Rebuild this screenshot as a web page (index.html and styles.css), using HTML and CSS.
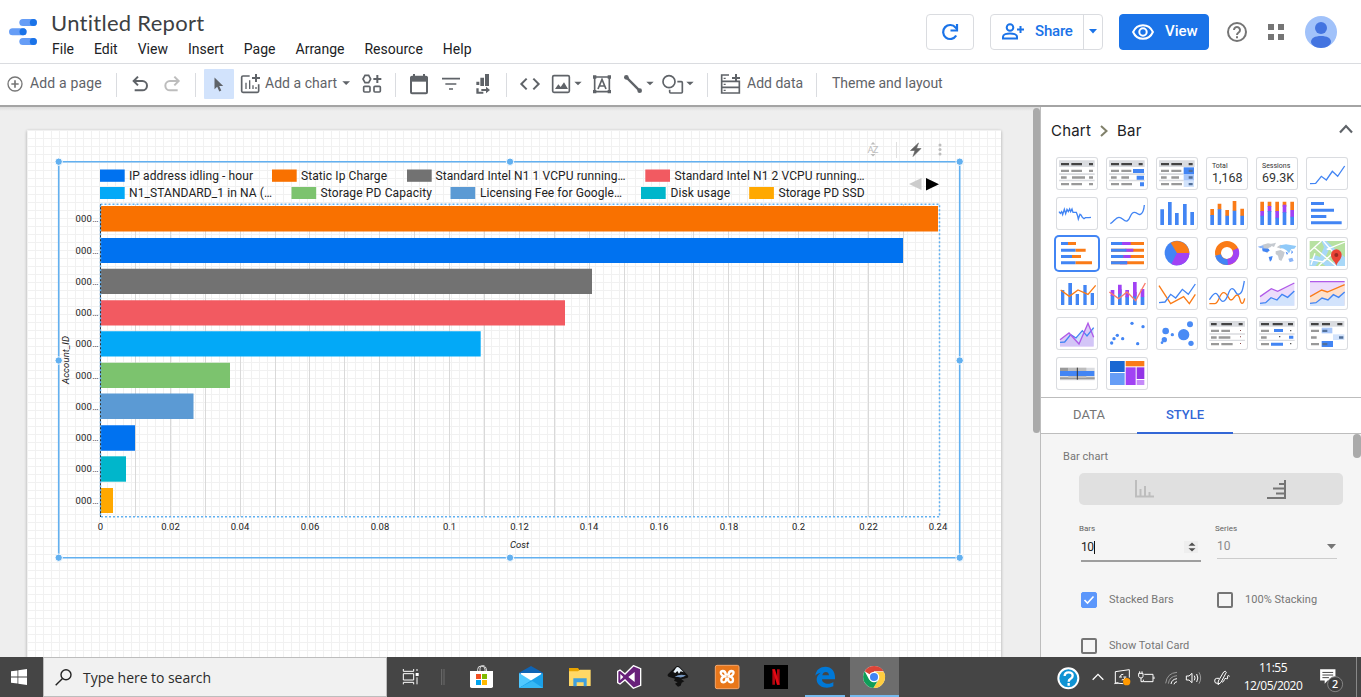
FILE: index.html
```html
<!DOCTYPE html>
<html lang="en">
<head>
<meta charset="utf-8">
<title>Untitled Report</title>
<link rel="stylesheet" href="styles.css">
</head>
<body>
<div class="app">
<header class="header">
  <svg class="logo" width="28" height="28" viewBox="27 57 84 84">
    <g fill="#669df6"><rect x="58" y="57" width="53" height="21" rx="10.500"/><rect x="27" y="85" width="53" height="21" rx="10.500"/><rect x="58" y="114" width="53" height="21" rx="10.500"/></g>
    <g fill="#1a73e8"><circle cx="100" cy="67.500" r="10.500"/><circle cx="69" cy="95.500" r="10.500"/><circle cx="100" cy="124.500" r="10.500"/></g>
  </svg>
  <div class="heading">
    <div class="title">Untitled Report</div>
    <nav class="menu"><span>File</span><span>Edit</span><span>View</span><span>Insert</span><span>Page</span><span>Arrange</span><span>Resource</span><span>Help</span></nav>
  </div>
  <div class="actions">
    <div class="btn refresh"><svg width="18" height="18" viewBox="0 0 18 18" fill="none" stroke="#1a73e8" stroke-width="2.200"><path d="M15.200 12.500A7 7 0 1 1 14.600 4.600L16 6"/><path d="M16 1v6.500H9.500" /></svg></div>
    <div class="btn share">
      <div class="share-main"><svg width="22" height="17" viewBox="0 0 22 17" fill="none" stroke="#1a73e8" stroke-width="2"><circle cx="8" cy="4.500" r="3.300"/><path d="M1 15.500v-1.700C1 11.500 5 10.500 8 10.500s7 1 7 3.300v1.700zM18.500 3v7M15 6.500h7"/></svg><span>Share</span></div>
      <div class="share-drop"><svg width="8" height="5" viewBox="0 0 8 5"><path d="M0 0h8L4 4.500z" fill="#1a73e8"/></svg></div>
    </div>
    <div class="btn view"><svg width="22" height="16" viewBox="0 0 22 16" fill="none" stroke="#fff" stroke-width="2"><path d="M1.100 8C3 3.700 6.700 1.200 11 1.200S19 3.700 20.900 8C19 12.300 15.300 14.800 11 14.800S3 12.300 1.100 8z"/><circle cx="11" cy="8" r="3.700"/></svg><span>View</span></div>
    <svg class="help" width="20" height="20" viewBox="0 0 20 20" fill="none" stroke="#757575" stroke-width="2"><circle cx="10" cy="10" r="9"/><path d="M7 8a3 3 0 1 1 4.600 2.500C10.500 11.300 10 11.700 10 13"/><path d="M10 14.300v2"/></svg>
    <svg class="apps" width="16" height="16" viewBox="0 0 16 16" fill="#757575"><path d="M0 0h6v6H0zM10 0h6v6h-6zM0 10h6v6H0zM10 10h6v6h-6z"/></svg>
    <svg class="avatar" width="32" height="32" viewBox="0 0 32 32"><circle cx="16" cy="16" r="16" fill="#a1c2fa"/><circle cx="16" cy="12" r="6" fill="#4374e0"/><path d="M6 26c0-4 4-6 10-6s10 2 10 6c0 3-5 6-10 6S6 29 6 26z" fill="#4374e0"/></svg>
  </div>
</header>

<div class="toolbar">
  <svg width="30" height="41" viewBox="0 192 90 123" fill="none" stroke="#777" stroke-width="4"><circle cx="45" cy="252" r="21"/><path d="M45 241v22M34 252h22" stroke-width="5"/></svg>
  <span class="label add-page">Add a page</span>
  <i class="sep"></i>
  <svg width="38" height="41" viewBox="351 192 114 123" fill="none" stroke="#5f6368" stroke-width="6"><path d="M402 243h25a14 14 0 0 1 0 28h-23M414 230l-13 13 13 13"/></svg>
  <svg width="40" height="41" viewBox="465 192 120 123" fill="none" stroke="#bdbdbd" stroke-width="6"><path d="M535 243h-25a14 14 0 0 0 0 28h23M523 230l13 13-13 13"/></svg>
  <i class="sep"></i>
  <div class="select-tool"><svg width="10" height="15" viewBox="0 0 10 15"><path d="M.5.500v11.700l2.700-2.500 2.100 4.700 2-.9-2.100-4.500h4z" fill="#5f6368"/></svg></div>
  <svg width="31" height="41" viewBox="702 192 93 123" fill="none" stroke="#5f6368" stroke-width="5"><path d="M749 228h-20q-4 0-4 4v41q0 4 4 4h43q4 0 4-4v-20"/><path d="M768 222v24M756 234h24" stroke-width="6"/><path d="M738 248v19M749 241v26M759 256v11M768 261v6" stroke-width="4"/></svg>
  <span class="label add-chart">Add a chart</span>
  <svg width="17" height="41" viewBox="1017 192 51 123"><path d="M1027 244h23l-11.500 11z" fill="#5f6368"/></svg>
  <svg width="39" height="41" viewBox="1068 192 117 123" fill="none" stroke="#5f6368" stroke-width="5"><path d="M1095 226h11l6 11-6 11h-11l-6-11z"/><path d="M1132 225v24M1120 237h24" stroke-width="6"/><rect x="1091" y="259" width="19" height="17" rx="3"/><rect x="1122" y="259" width="19" height="17" rx="3"/></svg>
  <i class="sep"></i>
  <svg width="40" height="41" viewBox="1188 192 120 123" fill="none" stroke="#5f6368" stroke-width="6"><rect x="1233" y="230" width="48" height="50" rx="3"/><path d="M1231 238h52" stroke-width="14"/><path d="M1242 222v10M1272 222v10"/></svg>
  <svg width="32" height="41" viewBox="1308 192 96 123" stroke="#5f6368" stroke-width="5"><path d="M1326 236h54M1336 252h33M1347 267h12"/></svg>
  <svg width="38" height="41" viewBox="-36 12 114 123" fill="#5f6368"><path d="M15 42h12v36H15zM1 53h11v25H1zM-11 65h9v10h-9zM-11 85h7v10h14v6h-21z"/><path d="M4 87h14v-7l12 10-12 10v-7H4z"/></svg>
  <i class="sep"></i>
  <svg width="39" height="41" viewBox="81 12 117 123" fill="none" stroke="#5f6368" stroke-width="6"><path d="M140 56l-16 16 16 16M160 56l16 16-16 16"/></svg>
  <svg width="41" height="41" viewBox="198 12 123 123"><rect x="218" y="47" width="50" height="50" rx="4" fill="none" stroke="#5f6368" stroke-width="5"/><path d="M225 87l10-14 7 8 10-14 12 20zM283 65h22l-11 11z" fill="#5f6368"/></svg>
  <svg width="31" height="41" viewBox="321 12 93 123" fill="none" stroke="#5f6368"><path d="M344 51h44v44h-44z" stroke-width="5"/><path d="M339 46h10v10h-10zM383 46h10v10h-10zM339 90h10v10h-10zM383 90h10v10h-10z" fill="#5f6368" stroke="none"/><path d="M354 87l12-29 12 29M358 78h16" stroke-width="5"/></svg>
  <svg width="40" height="41" viewBox="414 12 120 123" fill="#5f6368"><path d="M440 53l38 38" stroke="#5f6368" stroke-width="7"/><circle cx="439" cy="52" r="7"/><circle cx="479" cy="92" r="7"/><path d="M499 65h22l-11 11z"/></svg>
  <svg width="49" height="41" viewBox="534 12 147 123" fill="none" stroke="#5f6368" stroke-width="5"><circle cx="567" cy="65" r="18"/><path d="M592 65h12q3 0 3 3v28q0 3-3 3h-32q-3 0-3-3V89"/><path d="M619 65h22l-11 11z" fill="#5f6368" stroke="none"/></svg>
  <i class="sep"></i>
  <svg width="39" height="41" viewBox="684 12 117 123" fill="none" stroke="#5f6368" stroke-width="5"><path d="M747 45h-22v54h53V82h-53M725 64h53v18"/><path d="M768 42v24M756 54h24" stroke-width="6"/><path d="M731 55h6M731 73h6M731 91h6" stroke-width="4"/></svg>
  <span class="label add-data">Add data</span>
  <i class="sep"></i>
  <span class="label theme">Theme and layout</span>
</div>

<main class="work">
  <section class="canvas">
    <div class="sheet">
      <svg class="chart" width="974" height="527" viewBox="27 130 974 527">
        <g fill="#bdbdbd"><text x="867.500" y="153" font-size="9.500" textLength="11">AZ</text><path d="M870.500 144.500l2.500-2.500 2.500 2.500zM870.500 154l2.500 2.500 2.500-2.500z"/><circle cx="940" cy="145" r="1.500"/><circle cx="940" cy="149.500" r="1.500"/><circle cx="940" cy="154" r="1.500"/></g>
        <path d="M896.500 142v16" stroke="#e0e0e0"/><path d="M918.500 143l-8 7.500h4.500l-2 6 8-8h-4.500z" fill="#616161" stroke="#616161" stroke-width=".6"/>
        <path stroke="#d9d9d9" d="M135.500 204v313M170.500 204v313M205.500 204v313M240.500 204v313M275.500 204v313M309.500 204v313M344.500 204v313M379.500 204v313M414.500 204v313M449.500 204v313M484.500 204v313M519.500 204v313M554.500 204v313M589.500 204v313M624.500 204v313M659.500 204v313M693.500 204v313M728.500 204v313M763.500 204v313M798.500 204v313M833.500 204v313M868.500 204v313M903.500 204v313"/>
        <g>
          <path fill="#f97100" d="M101 206h837v25.500H101z"/><path fill="#0072f0" d="M101 238h802v25H101z"/><path fill="#727272" d="M101 268.700h491v25.300H101z"/><path fill="#f25a61" d="M101 300.300h464v25.300H101z"/><path fill="#03a9f7" d="M101 331.300h379.700v25.300H101z"/><path fill="#7cc36e" d="M101 362.800h129v25.200H101z"/><path fill="#5b9ad4" d="M101 393.600h92.500V419H101z"/><path fill="#0072f0" d="M101 425.300h34v25.400h-34z"/><path fill="#00b6cb" d="M101 456.300h25v25.400h-25z"/><path fill="#ffa800" d="M101 488h12v25h-12z"/>
          <path fill="#0072f0" d="M100 169.500h24.700v12.300H100z"/><path fill="#f97100" d="M272 169.500h24.700v12.300H272z"/><path fill="#727272" d="M407 169.500h24.700v12.300H407z"/><path fill="#f25a61" d="M645.300 169.500H670v12.300h-24.700z"/><path fill="#03a9f7" d="M100 187h24.700v12H100z"/><path fill="#7cc36e" d="M291.500 187h24.700v12h-24.700z"/><path fill="#5b9ad4" d="M450.500 187h24.700v12h-24.700z"/><path fill="#00b6cb" d="M641 187h24.700v12H641z"/><path fill="#ffa800" d="M749.200 187h24.700v12h-24.700z"/>
        </g>
        <g class="legend">
          <text x="129" y="180" textLength="124">IP address idling - hour</text><text x="301" y="180" textLength="86">Static Ip Charge</text><text x="435.500" y="180" textLength="190">Standard Intel N1 1 VCPU running…</text><text x="674.500" y="180" textLength="190">Standard Intel N1 2 VCPU running…</text>
          <text x="129" y="197" textLength="143">N1_STANDARD_1 in NA (…</text><text x="320.500" y="197" textLength="111.500">Storage PD Capacity</text><text x="480" y="197" textLength="142">Licensing Fee for Google…</text><text x="670.500" y="197" textLength="59.500">Disk usage</text><text x="778.500" y="197" textLength="86">Storage PD SSD</text>
        </g>
        <path d="M921.500 178v12l-12.500-6z" fill="#ccc"/><path d="M926 178v12.500l13-6.300z"/>
        <path d="M100.500 204v313" stroke="#333"/>
        <path d="M100.500 204.300h839v312.500h-839z" fill="none" stroke="#62b0f0" stroke-width="1.500" stroke-dasharray="2 2"/>
        <g class="axis">
          <text x="75.500" y="222" textLength="23">000…</text><text x="75.500" y="254" textLength="23">000…</text><text x="75.500" y="285" textLength="23">000…</text><text x="75.500" y="316" textLength="23">000…</text><text x="75.500" y="347" textLength="23">000…</text><text x="75.500" y="379" textLength="23">000…</text><text x="75.500" y="410" textLength="23">000…</text><text x="75.500" y="441" textLength="23">000…</text><text x="75.500" y="472" textLength="23">000…</text><text x="75.500" y="504" textLength="23">000…</text>
        </g>
        <g class="axis" text-anchor="middle">
          <text x="100.500" y="530">0</text><text x="170.500" y="530">0.02</text><text x="240" y="530">0.04</text><text x="310" y="530">0.06</text><text x="380" y="530">0.08</text><text x="449.500" y="530">0.1</text><text x="519.500" y="530">0.12</text><text x="589" y="530">0.14</text><text x="659" y="530">0.16</text><text x="729" y="530">0.18</text><text x="798.500" y="530">0.2</text><text x="868.500" y="530">0.22</text><text x="938" y="530">0.24</text>
          <g font-style="italic"><text x="519.500" y="548">Cost</text><text transform="translate(69 360) rotate(-90)" textLength="48">Account_ID</text></g>
        </g>
        <path d="M58.700 161.700h901v396h-901z" stroke="#62b0f0" fill="none" stroke-width="1.600"/>
        <g class="handle"><circle cx="58.700" cy="161.700" r="3.700"/><circle cx="510" cy="161.700" r="3.700"/><circle cx="959.700" cy="161.700" r="3.700"/><circle cx="58.700" cy="360.500" r="3.700"/><circle cx="959.700" cy="360.500" r="3.700"/><circle cx="58.700" cy="557.700" r="3.700"/><circle cx="510" cy="557.700" r="3.700"/><circle cx="959.700" cy="557.700" r="3.700"/></g>
      </svg>
    </div>
    <div class="canvas-scroll"></div>
  </section>

  <aside class="panel">
    <div class="panel-head"><span>Chart</span><svg width="8" height="12" viewBox="0 0 8 12" fill="none" stroke="#80806a" stroke-width="2"><path d="M1 1l5.500 5L1 11"/></svg><span>Bar</span><svg class="collapse" width="14" height="10" viewBox="0 0 14 10" fill="none" stroke="#5f6368" stroke-width="2.200"><path d="M1 8.500l6-6.500 6 6.500"/></svg></div>
    <div class="types">
      <div class="card"><svg viewBox="48 141 126 99"><path fill="#dadce0" d="M57 151h107v20H57zM57 190h107v5H57zM57 209h107v5H57z"/><path fill="#444" d="M63 159h24v7H63zM94 159h32v7H94zM147 159h12v7h-12z"/><path fill="#999" d="M63 179h24v7H63zM94 179h32v7H94zM147 179h12v7h-12zM63 199h17v7H63zM96 199h39v7H96zM147 199h12v7h-12zM63 219h24v7H63zM94 219h32v7H94zM147 219h12v7h-12z"/></svg></div>
      <div class="card"><svg viewBox="198 141 126 99"><path fill="#dadce0" d="M207 151h107v20H207zM207 190h107v5H207zM207 209h107v5H207z"/><path fill="#444" d="M213 159h24v7h-24zM244 159h32v7h-32zM296 159h12v7h-12z"/><path fill="#999" d="M213 179h24v7h-24zM244 179h30v7h-30zM213 199h17v7h-17zM244 199h23v7h-23zM213 219h24v7h-24zM244 219h32v7h-32z"/><path fill="#4285f4" d="M279 177h33v12h-33zM290 197h22v12h-22zM300 217h12v12h-12z"/></svg></div>
      <div class="card"><svg viewBox="348 141 126 99"><path fill="#dadce0" d="M357 151h107v20H357zM357 190h74v5h-74zM357 209h74v5h-74z"/><path fill="#4285f4" d="M431 172h31v20h-31z"/><path fill="#a8c7fa" d="M431 192h31v20h-31z"/><path fill="#d2e3fc" d="M431 212h31v19h-31z"/><path fill="#444" d="M363 159h24v7h-24zM394 159h32v7h-32zM446 159h12v7h-12z"/><path fill="#999" d="M363 179h24v7h-24zM394 179h30v7h-30zM363 199h17v7h-17zM394 199h23v7h-23zM363 219h24v7h-24zM394 219h32v7h-32z"/><path fill="#52709a" d="M446 179h12v7h-12zM446 199h12v7h-12zM446 219h12v7h-12z"/></svg></div>
      <div class="card metric"><small>Total</small><b>1,168</b></div>
      <div class="card metric"><small>Sessions</small><b>69.3K</b></div>
      <div class="card"><svg viewBox="798 141 126 99"><path class="l b" d="M810 221l17-1 17-21 15 11 18-26 16 15 21-31"/></svg></div>

      <div class="card"><svg viewBox="48 261 126 99"><path class="l b" d="M57 305l4 5 4-5 3 9 5-16 4 13 4-13 4 7 4-8 3 8 4-8 3 10 6 0 4 0 4 11 2 9 5-14 3 2 4 7 5 4 4-3 5 0 6 0 6-1"/></svg></div>
      <div class="card"><svg viewBox="198 261 126 99"><path class="l b" d="M211 341c10-5 16-19 26-19s15 14 24 11c12-4 8-26 22-26 9 0 10 9 18 6 7-3 11-16 12-28"/></svg></div>
      <div class="card"><svg viewBox="348 261 126 99"><path fill="#4285f4" d="M361 298h11v47h-11zM384 276h11v69h-11zM405 309h11v36h-11zM429 282h11v63h-11zM451 306h11v39h-11z"/></svg></div>
      <div class="card"><svg viewBox="498 261 126 99"><path fill="#fa7b17" d="M511 297h11v20h-11zM533 281h11v18h-11zM556 300h11v18h-11zM578 273h11v30h-11zM601 296h11v22h-11z"/><path fill="#4285f4" d="M511 315h11v30h-11zM533 298h11v47h-11zM556 317h11v28h-11zM578 302h11v43h-11zM601 317h11v28h-11z"/></svg></div>
      <div class="card"><svg viewBox="648 261 126 99"><path fill="#fa7b17" d="M661 275h11v30h-11zM683 275h11v15h-11zM706 275h11v30h-11zM728 275h11v15h-11zM751 275h11v25h-11z"/><path fill="#a142f4" d="M661 303h11v16h-11zM683 288h11v18h-11zM706 303h11v22h-11zM728 284h11v25h-11zM751 300h11v22h-11z"/><path fill="#4285f4" d="M661 317h11v28h-11zM683 303h11v42h-11zM706 323h11v22h-11zM728 307h11v38h-11zM751 320h11v25h-11z"/></svg></div>
      <div class="card"><svg viewBox="798 261 126 99"><path fill="#4285f4" d="M813 276h39v9h-39zM813 296h69v9h-69zM813 315h46v9h-46zM813 334h92v9h-92z"/></svg></div>

      <div class="card selected"><svg viewBox="48 381 126 99"><path fill="#4285f4" d="M63 396h21v9H63zM63 416h44v9H63zM63 435h33v9H63zM63 454h44v9H63z"/><path fill="#fa7b17" d="M84 396h24v9H84zM107 416h30v9h-30zM96 435h27v9H96zM107 454h49v9h-49z"/></svg></div>
      <div class="card"><svg viewBox="198 381 126 99"><path fill="#fa7b17" d="M213 396h99v9h-99zM213 416h99v9h-99zM213 435h99v9h-99zM213 454h99v9h-99z"/><path fill="#a142f4" d="M246 396h26v9h-26zM256 416h24v9h-24zM250 435h22v9h-22zM240 454h22v9h-22z"/><path fill="#4285f4" d="M213 396h33v9h-33zM213 416h46v9h-46zM213 435h37v9h-37zM213 454h48v9h-48z"/></svg></div>
      <div class="card"><svg viewBox="348 381 126 99"><circle cx="411" cy="429" r="37" fill="#4285f4"/><path fill="#fa7b17" d="M411 429l-19-31a37 37 0 0 1 56 31z"/><path fill="#a142f4" d="M411 429h37a37 37 0 0 1-54 33z"/></svg></div>
      <div class="card"><svg viewBox="498 381 126 99" fill="none" stroke-width="18"><circle cx="561" cy="429" r="27" stroke="#fa7b17"/><path stroke="#a142f4" d="M586 418a27 27 0 0 1-25 38"/><path stroke="#4285f4" d="M563 456a27 27 0 0 1-29-21"/></svg></div>
      <div class="card"><svg viewBox="648 381 126 99"><g fill="#c5cad0"><path d="M668 404l16-4 14 2-5 9-8 3-5 8 5 8-8-3-9-12zM695 401l13-3-6 13-7-3zM707 424l15-4 12 7-3 12-7 14-7-4-3-12-7-5zM710 412l11-8 9 4-7 8z"/></g><path fill="#90caf9" d="M721 406l17-3 31 5-6 8-9 1-7 13-8-9-8-5-11-3z"/><path fill="#8ab4f8" d="M653 410l16-4 3 7-10 2zM745 446l12-3 4 10-12 4z"/><path fill="#4285f4" d="M666 415l20 1 3 6-8 5-13-3zM686 441l12-3-3 12-5 5zM737 425l7 4-3 6zM755 420l4 7-5 5z"/></svg></div>
      <div class="card"><svg viewBox="798 381 126 99"><path fill="#b7e1a1" d="M809 393h106v75H809z"/><path fill="#a8d8f8" d="M809 450l17-14 14 5 12-30-8-18h16l35 33 20 16v26H856l-18-14-12 14h-17z"/><path fill="#b7e1a1" d="M853 448l15-32 23 21-12 22zM862 393h53v28l-22-6z"/><path d="M809 425l35-32M822 412l66 56M809 448l41 8 30-28-30-35M825 430l-12 34M860 418l55-22M836 468l20-20" stroke="#fff" stroke-width="4" fill="none"/><path fill="#ea4335" d="M889 467c-4-13-16-19-16-33a16 16 0 0 1 32 0c0 14-12 20-16 33z"/><circle cx="889" cy="435" r="6" fill="#982b22"/></svg></div>

      <div class="card"><svg viewBox="48 21 126 99"><path fill="#4285f4" d="M63 60h10v45H63zM85 39h11v66H85zM107 72h10v33h-10zM130 45h10v60h-10zM152 69h10v36h-10z"/><path class="l o" d="M62 60l26 19 26-19 30 13 23-27"/></svg></div>
      <div class="card"><svg viewBox="198 21 126 99"><path fill="#4285f4" d="M212 76h11v29h-11zM234 58h11v47h-11zM256 79h11v26h-11zM279 66h11v39h-11zM302 80h11v25h-11z"/><path fill="#a142f4" d="M212 60h11v18h-11zM234 44h11v27h-11zM256 60h11v22h-11zM279 36h11v43h-11zM302 57h11v24h-11z"/><path class="l" stroke="#fa7b6b" d="M208 66l28 20 25-20 26 26 29-53"/></svg></div>
      <div class="card"><svg viewBox="348 21 126 99"><path class="l o" d="M357 47l35 54 39-21 17 21 18-28"/><path class="l b" d="M357 98l18-2 17-23 15 11 20-26 18 15 21-31"/></svg></div>
      <div class="card"><svg viewBox="498 21 126 99"><path class="l o" d="M508 101h16c13 0 14-33 27-33 12 0 14 22 22 22 9 0 10-15 18-15 10 0 8 25 15 25 6 0 7-11 8-15"/><path class="l b" d="M508 89c6-8 12-19 19-19 9 0 11 24 22 24 15 0 15-38 27-38 11 0 10 17 18 17 12 0 14-14 19-40"/></svg></div>
      <div class="card"><svg viewBox="648 21 126 99"><path fill="#ecdcfb" d="M660 80l34-24 19 8 50-25v68H660z"/><path fill="#d2e3fc" d="M660 100l17-2 16-15 18 7 15-17 17 9 20-19v44H660z"/><path class="l p" d="M660 80l34-24 19 8 50-25"/><path class="l b" d="M660 100l17-2 16-15 18 7 15-17 17 9 20-19"/></svg></div>
      <div class="card"><svg viewBox="798 21 126 99"><path fill="#ecdcfb" d="M810 34h104v70H810z"/><path fill="#fee0cc" d="M810 80l35-20 17 6 52-22v60H810z"/><path fill="#d2e3fc" d="M810 100l18-2 18-14 18 6 16-16 16 8 18-16v42H810z"/><path class="l p" d="M810 35h104"/><path class="l o" d="M810 80l35-20 17 6 52-22"/><path class="l b" d="M810 100l18-2 18-14 18 6 16-16 16 8 18-16"/></svg></div>

      <div class="card"><svg viewBox="48 141 126 99"><path fill="#d2e3fc" d="M60 217l14-1 18-22 16 10 19-22 14 16 20-25v55H60z"/><path fill="#d3bdf5" opacity=".8" d="M60 209l27-20 30 33 27-62 17 42v28H60z"/><path class="l b" d="M60 217l14-1 18-22 16 10 19-22 14 16 20-25"/><path class="l p" d="M60 209l27-20 30 33 27-62 17 42"/></svg></div>
      <div class="card"><svg viewBox="198 141 126 99" fill="#4285f4"><circle cx="215" cy="219" r="5"/><circle cx="222" cy="206" r="5"/><circle cx="232" cy="196" r="5"/><circle cx="248" cy="206" r="5"/><circle cx="276" cy="160" r="5"/><circle cx="309" cy="170" r="5"/><circle cx="293" cy="221" r="5"/></svg></div>
      <div class="card"><svg viewBox="348 141 126 99" fill="#4a8bf5"><circle cx="377" cy="183" r="10"/><circle cx="397" cy="194" r="5"/><circle cx="431" cy="194" r="17"/><circle cx="450" cy="163" r="9"/><circle cx="453" cy="220" r="8"/><circle cx="373" cy="209" r="8"/><circle cx="366" cy="218" r="4"/></svg></div>
      <div class="card"><svg viewBox="498 141 126 99"><path fill="#dadce0" d="M508 153h107v17H508zM508 190h107v4H508zM508 209h107v4H508z"/><path fill="#444" d="M513 159h17v7h-17zM544 159h32v7h-32zM596 159h12v7h-12z"/><path fill="#999" d="M513 179h24v7h-24zM544 179h26v7h-26zM513 199h17v7h-17zM536 199h35v7h-35zM513 219h24v7h-24zM544 219h34v7h-34z"/><path fill="#844" d="M600 180h3v3h-3zM600 199h3v3h-3zM600 219h3v3h-3z"/></svg></div>
      <div class="card"><svg viewBox="648 141 126 99"><path fill="#dadce0" d="M657 153h107v17H657zM657 190h107v4H657zM657 209h107v4H657z"/><path fill="#444" d="M663 159h24v7h-24zM698 159h30v7h-30zM744 159h15v7h-15z"/><path fill="#999" d="M663 179h24v7h-24zM663 199h17v7h-17zM663 219h24v7h-24z"/><path fill="#4285f4" d="M702 177h27v9h-27zM747 197h13v9h-13zM693 218h36v9h-36z"/><path fill="#555" d="M750 180h4v4h-4zM717 198h4v4h-4zM750 219h4v4h-4z"/></svg></div>
      <div class="card"><svg viewBox="798 141 126 99"><path fill="#dadce0" d="M808 153h105v17H808z"/><path fill="#a8c7fa" d="M845 173h32v17h-32z"/><path fill="#d2e3fc" d="M879 193h34v17h-34z"/><path fill="#4285f4" d="M845 213h34v18h-34z"/><path fill="#444" d="M813 159h23v7h-23zM846 159h24v7h-24zM892 159h15v7h-15z"/><path fill="#999" d="M813 179h24v7h-24zM813 199h17v7h-17zM813 219h24v7h-24z"/><path fill="#52709a" d="M847 179h15v7h-15zM897 199h13v7h-13zM847 219h15v7h-15z"/></svg></div>

      <div class="card"><svg viewBox="48 261 126 99"><path fill="#dadce0" d="M60 293h104v38H60z"/><path fill="#9a9a9a" d="M60 293h25v12H60zM60 322h104v6H60z"/><path fill="#bdbdbd" d="M85 293h54v12H85zM85 317h54v7H85z"/><path fill="#4285f4" d="M60 303h103v15H60z"/><path d="M112 293v36" stroke="#333" stroke-width="3"/></svg></div>
      <div class="card"><svg viewBox="198 261 126 99"><path fill="#1967d2" d="M210 273h44v33h-44z"/><path fill="#669df6" d="M210 309h44v36h-44z"/><path fill="#fa7b17" d="M257 273h56v16h-56z"/><path fill="#a142f4" d="M257 292h30v53h-30z"/><path fill="#9334e6" d="M290 292h23v35h-23z"/><path fill="#c58af9" d="M290 330h23v15h-23z"/></svg></div>
    </div>
    <div class="tabs"><span class="tab">DATA</span><span class="tab active">STYLE</span></div>
    <div class="props">
      <div class="props-body">
        <div class="group">Bar chart</div>
        <div class="toggle">
          <svg width="20" height="20" viewBox="1 0 20 20" fill="none" stroke="#bdbdbd" stroke-width="2"><path d="M2 1v17.500M1 17.500h19M6.500 10v7M11 7v10M15.500 13v4"/></svg>
          <svg width="20" height="20" viewBox="0 0 20 20" fill="none" stroke="#757575" stroke-width="2"><path d="M18 1v19M0 19h19M9 14.500h9M6 9.500h12M12 5h6"/></svg>
        </div>
        <div class="fields">
          <div class="field focus"><label>Bars</label><div class="control"><span class="value">10</span><svg width="14" height="12" viewBox="0 0 14 12"><path fill="#eee" d="M0 0h14v12H0z"/><path fill="#505050" d="M4.500 4.700L8 1.500l3.500 3.200zM4.500 7.300h7L8 10.500z"/></svg></div></div>
          <div class="field"><label>Series</label><div class="control"><span class="value">10</span><svg width="9" height="5" viewBox="0 0 9 5"><path fill="#757575" d="M0 0h9L4.500 5z"/></svg></div></div>
        </div>
        <div class="checks">
          <div class="check"><i class="box on"><svg width="14" height="14" viewBox="0 0 14 14" fill="none" stroke="#fff" stroke-width="1.600"><path d="M2.500 7l3 3 6-6.500"/></svg></i><span>Stacked Bars</span></div>
          <div class="check"><i class="box"></i><span>100% Stacking</span></div>
          <div class="check"><i class="box"></i><span>Show Total Card</span></div>
        </div>
      </div>
      <div class="props-scroll"></div>
    </div>
  </aside>
</main>

<footer class="taskbar">
  <div class="start"><svg width="16" height="16" viewBox="0 0 16 16" fill="#fff"><path d="M0 2.300L6.500 1.400v6.200H0zM7.300 1.200L16 0v7.600H7.300zM0 8.400h6.500v6.200L0 13.700zM7.300 8.400H16V16l-8.700-1.200z"/></svg></div>
  <div class="search"><svg width="17" height="17" viewBox="0 0 17 17" fill="none" stroke="#222" stroke-width="1.400"><circle cx="11" cy="5.800" r="5"/><path d="M7.500 9.500L.7 16.300"/></svg><span>Type here to search</span></div>
  <svg width="71" height="40" viewBox="1161 6 213 120" fill="none" stroke="#fff" stroke-width="3"><path d="M1210 42v7h31v-7M1210 56h31v19h-31zM1210 88v-6h31v6M1251 42v6M1251 67v21"/><path d="M1247 54h9v9h-9z" fill="#fff" stroke="none"/><path d="M1325 42v48M1332 42v48" stroke="#6c6c6c"/></svg>
  <div class="apps-row">
    <svg viewBox="-6 6 147 120"><path d="M30 48h69v46q0 5-5 5H35q-5 0-5-5z" fill="#fff"/><path d="M53 48v-5q0-10 11-10t11 10v5M60 48v-8q0-8 9-8t11 16" fill="none" stroke="#ddd" stroke-width="3"/><path fill="#f25022" d="M48 57h15v15H48z"/><path fill="#7fba00" d="M66 57h15v15H66z"/><path fill="#00a4ef" d="M48 75h15v15H48z"/><path fill="#ffb900" d="M66 75h15v15H66z"/></svg>
    <svg viewBox="141 6 147 120"><path fill="#0f64b4" d="M177 53l36-20 36 20v46h-72z"/><path fill="#fff" d="M182 54h62v25h-62z"/><path fill="#50c8ff" d="M177 54l40 25-40 20z"/><path fill="#1ba0e8" d="M249 54l-72 45h72z"/><path fill="#36b8f5" d="M177 99l40-21 32 21z"/></svg>
    <svg viewBox="288 6 147 120"><path fill="#e8a400" d="M327 39h27l5 7h31v8h-63z"/><path fill="#ffd866" d="M327 49h27l6-5h32v49h-65z"/><path fill="#3f9fdd" d="M340 70h40v24h-9V82h-21v12h-10z"/></svg>
    <svg viewBox="435 6 147 120"><path fill="#68217a" stroke="#fff" stroke-width="4" d="M520 32l22 9v50l-22 9-25-25-15 12-7-4V49l7-4 15 12z"/><path fill="#fff" d="M524 51v30l-19-15zM481 57v18l9-9z"/></svg>
    <svg viewBox="582 6 147 120"><path fill="#111" d="M653 33q4 0 7 4l22 22q6 7-1 10l-17 4 9 6-8 4-3 9-8 3-9-9 8-4-11-5 3-6-17-5q-9-4-3-10l21-19q4-4 7-4z"/><path fill="#e8f2fa" d="M653 36q4 0 8 5l10 11-9-3-5 7-5-8-6 6-6-3 8-12q2-3 5-3z"/><path fill="#7595bd" d="M644 66q13-10 34-5-10 9-24 5-6 0-10 0z"/></svg>
    <svg viewBox="729 6 147 120"><rect x="766" y="31" width="71" height="70" rx="5" fill="#e8771b" stroke="#f6a568" stroke-width="3"/><path d="M784 58q-5-9 4-10 9 0 9 11h9q0-11 9-11 9 1 4 10-3 4-9 7 9 2 9 9 0 8-7 8t-8-10h-5q-1 10-8 10t-7-8q0-7 9-9-6-3-9-7z" fill="none" stroke="#fff" stroke-width="7"/></svg>
    <svg viewBox="876 6 147 120"><path fill="#000" d="M912 30h72v72h-72z"/><path fill="#b1060f" d="M937 43h8v46h-8zM951 43h8v46h-8z"/><path fill="#e50914" d="M937 43h8l14 46h-8z"/></svg>
    <svg viewBox="1023 6 147 120"><path fill="#0078d7" d="M1066 62c2-19 16-27 30-27 18 0 29 13 29 31v7h-39c0 15 24 17 34 8v13c-19 9-47 4-50-18-1-11 5-18 12-23-11 2-14 7-16 9zM1087 61h20c0-14-19-13-20 0z"/><path fill="#76b9ed" d="M1035 120h120v6h-120z"/></svg>
    <svg class="current" viewBox="1170 6 147 120"><circle cx="1242" cy="66" r="33" fill="#fff"/><path fill="#db4437" d="M1242 66L1214 49a33 33 0 0 1 57 0h-29z"/><path fill="#ffcd40" d="M1242 50h29a33 33 0 0 1-31 49l16-25z"/><path fill="#0f9d58" d="M1214 49a33 33 0 0 0 26 50l15-25-13 8-15-9z"/><circle cx="1242" cy="66" r="16" fill="#fff"/><circle cx="1242" cy="66" r="12" fill="#4285f4"/><path fill="#76b9ed" d="M1170 120h147v6h-147z"/></svg>
  </div>
  <div class="tray">
    <svg width="37" height="40" viewBox="30 6 111 120"><circle cx="85" cy="70" r="30" fill="#0f93d3" stroke="#fff" stroke-width="6"/><path d="M74 63q0-11 12-11t12 10q0 6-7 10-5 3-5 8M86 84v8" fill="none" stroke="#fff" stroke-width="7"/></svg>
    <svg width="22" height="40" viewBox="141 6 66 120" fill="none" stroke="#fff" stroke-width="4"><path d="M158 74l16-16 16 16"/></svg>
    <svg width="26" height="40" viewBox="207 6 78 120" fill="none" stroke="#fff" stroke-width="3"><path d="M226 50l42-6v24M226 50v34l24 2M223 86l12-3M241 65q0-8 9-7M255 67q0 8-10 8M237 66h9M250 66h9"/><circle cx="260" cy="80" r="11" fill="#ff9800" stroke="none"/></svg>
    <svg width="24" height="40" viewBox="285 6 72 120" fill="none" stroke="#fff" stroke-width="3"><path d="M313 58h26v22h-29v-6M342 65v7M296 55h13v9q0 5-6 5t-7-5zM299 55v-6M306 55v-6M303 69v11h6"/></svg>
    <svg width="23" height="40" viewBox="357 6 69 120" fill="none" stroke="#999" stroke-width="3"><path d="M377 85q4-31 34-33M385 86q3-22 26-24"/><path d="M393 87q2-14 18-16M402 88q1-7 9-8" stroke="#fff"/></svg>
    <svg width="25" height="40" viewBox="426 6 75 120" fill="none" stroke="#fff" stroke-width="3"><path d="M439 63h8l9-8v28l-9-8h-8zM463 62q4 7 0 14M470 57q7 12 0 24"/><path d="M477 52q10 17 0 34" stroke="#999"/></svg>
    <svg width="29" height="40" viewBox="501 6 87 120" fill="none" stroke="#fff" stroke-width="3"><path d="M551 51q6-5 8 1l-16 30-9 7 1-11zM538 70h-8q-6 0-6 8t9 7h4M546 82q6-2 7-8t6-3 4-5 6-2"/></svg>
    <div class="clock"><div>11:55</div><div>12/05/2020</div></div>
    <svg class="notice" width="47" height="40" viewBox="810 6 141 120"><path fill="#fff" d="M841 42h47v35h-24l-9 10V77h-14z"/><path d="M848 52h33M848 60h33M848 68h20" stroke="#444" stroke-width="3"/><circle cx="887" cy="88" r="23" fill="#3e3e3e" stroke="#858585" stroke-width="3"/><text x="887" y="99" text-anchor="middle">2</text></svg>
  </div>
</footer>
</div>
</body>
</html>
```
FILE: styles.css
```css
* { box-sizing: border-box; }
body { margin: 0; font-family: Roboto, "Liberation Sans", sans-serif; color: #202124; }
svg { display: block; flex: none; }
.app { width: 1361px; height: 697px; display: flex; flex-direction: column; overflow: hidden; background: #fff; }

.header { height: 64px; flex: none; display: flex; border-bottom: 1px solid #dadce0; }
.logo { margin: 19px 0 0 9px; }
.heading { margin-left: 14px; }
.title { height: 38px; padding-top: 9px; font: 22px/28px Lato, sans-serif; letter-spacing: .28px; color: #3c4043; }
.menu { display: flex; gap: 20px; padding: 3px 0 0 1px; font-size: 14px; line-height: 16px; color: #202124; }
.actions { margin-left: auto; display: flex; align-items: center; height: 63px; }
.btn { height: 36px; border: 1px solid #dadce0; border-radius: 4px; display: flex; align-items: center; font: 500 15px Roboto, sans-serif; color: #1a73e8; }
.btn span { padding-bottom: 1px; }
.refresh { width: 48px; justify-content: center; margin-right: 16px; }
.share { width: 113px; margin-right: 16px; }
.share-main { width: 93px; height: 100%; padding-left: 11px; display: flex; align-items: center; gap: 11px; border-right: 1px solid #dadce0; letter-spacing: -.2px; }
.share-drop { flex: 1; display: flex; justify-content: center; }
.view { width: 90px; background: #1a73e8; border-color: #1a73e8; color: #fff; gap: 11px; padding-left: 12px; }
.help { margin-left: 18px; }
.apps { margin-left: 21px; }
.avatar { margin: 0 24px 0 21px; }

.toolbar { height: 41px; flex: none; display: flex; align-items: center; }
.label { font-size: 14px; line-height: 38px; height: 41px; color: #5f6368; white-space: nowrap; }
.sep { width: 1px; height: 24px; background: #dadce0; flex: none; }
.add-page { width: 86px; letter-spacing: .17px; }
.select-tool { width: 30px; height: 30px; margin: 0 0 1px 8px; background: #d2e3fc; display: flex; align-items: center; justify-content: center; border-radius: 1px; }
.add-chart { width: 74px; letter-spacing: .03px; }
.add-data { width: 69px; }
.theme { padding-left: 15px; letter-spacing: -.03px; }

.work { flex: 1; min-height: 0; display: flex; border-top: 2px solid #a4a4a4; }
.canvas { width: 1040px; display: flex; background: linear-gradient(#dcdcdc, #eee 4px); overflow: hidden; }
.sheet { width: 974px; height: 560px; margin: 23px 0 0 27px; box-shadow: 0 1px 3px rgba(0,0,0,.3); background: linear-gradient(90deg, #f1f1f1 1px, transparent 1px) 0 0 / 8px 8px, linear-gradient(#f1f1f1 1px, transparent 1px) 0 0 / 8px 8px, #fff; }
.canvas-scroll { width: 7px; height: 325px; margin: 1px 0 0 auto; border-radius: 4px; background: #aaa; }
.legend { font-size: 12px; fill: #222; }
.axis { font-size: 9.5px; fill: #222; }
.handle { fill: #62b0f0; stroke: #fff; stroke-width: 1px; }

.panel { width: 321px; border-left: 1px solid #bdbdbd; background: #fff; display: flex; flex-direction: column; }
.panel-head { height: 50px; flex: none; display: flex; align-items: center; gap: 9px; padding: 0 8px 2px 10px; font: 15px/20px Inter, sans-serif; letter-spacing: .2px; color: #202124; }
.collapse { margin: 0 0 4px auto; }
.types { display: grid; grid-template-columns: repeat(6, 42px); grid-auto-rows: 33px; column-gap: 8px; row-gap: 7px; padding-left: 15px; height: 240px; flex: none; }
.card { box-shadow: inset 0 0 0 1px #dadce0; border-radius: 3px; }
.card svg { width: 42px; height: 33px; }
.selected { box-shadow: 0 0 0 2px #4285f4; }
.l { fill: none; stroke-width: 4px; }
.b { stroke: #4285f4; }
.o { stroke: #fa7b17; }
.p { stroke: #b05ae8; }
.metric { padding: 5px 0 0 6px; color: #333; }
.metric small { display: block; font-size: 7px; line-height: 9px; }
.metric b { display: block; font-size: 12.5px; font-weight: 400; line-height: 13px; }
.tabs { height: 37px; flex: none; display: flex; border-top: 1px solid #bdbdbd; border-bottom: 1px solid #bdbdbd; font-size: 13px; }
.tab { width: 96px; height: 37px; line-height: 34px; text-align: center; color: #757575; }
.tab.active { color: #3367d6; border-bottom: 3px solid #3367d6; font-weight: 500; }
.props { flex: 1; min-height: 0; display: flex; background: #f5f5f5; overflow: hidden; }
.props-body { width: 312px; padding: 16px 0 0 22px; color: #757575; font-size: 11px; }
.group { height: 23px; line-height: 14px; letter-spacing: .05px; }
.toggle { width: 264px; height: 32px; margin-left: 16px; border-radius: 5px; background: #e0e0e0; display: flex; align-items: center; justify-content: space-around; }
.fields { display: flex; gap: 16px; padding: 19px 0 0 16px; }
.field { width: 120px; height: 39px; }
.field label { display: block; font-size: 8px; line-height: 10px; color: #616161; }
.control { height: 25px; margin-left: 2px; width: 120px; display: flex; align-items: center; justify-content: space-between; border-bottom: 1px solid #ccc; font-size: 12px; color: #8a8a8a; }
.control svg { margin-right: 1px; }
.focus .control { height: 28px; border-bottom: 2px solid #9e9e9e; color: #222; }
.focus .value { border-right: 1px solid #111; line-height: 13px; }
.focus .value { letter-spacing: -.5px; }
.focus .control svg { margin-right: 3px; }
.checks { display: grid; grid-template-columns: 136px 136px; grid-auto-rows: 16px; row-gap: 30px; padding: 29px 0 0 18px; }
.check { display: flex; align-items: center; gap: 12px; white-space: nowrap; letter-spacing: .03px; }
.check span { padding-bottom: 2px; }
.box { width: 16px; height: 16px; border: 2px solid #757575; border-radius: 2px; flex: none; }
.box.on { border: 1px solid #5c97fb; background: #5c97fb; }
.props-scroll { width: 8px; height: 24px; border-radius: 4px; background: #aaa; }

.taskbar { height: 40px; flex: none; display: flex; background: #454545; color: #fff; font-family: "Open Sans", "Noto Sans", sans-serif; }
.start { width: 43px; display: flex; align-items: center; padding: 0 0 0 11px; }
.search { width: 344px; background: #f1f1f1; border: 1px solid #bdbdbd; display: flex; align-items: center; gap: 11px; padding: 0 0 0 11px; color: #2b2b2b; font-size: 14px; letter-spacing: -.04px; }
.apps-row { display: flex; }
.apps-row svg { width: 49px; height: 40px; }
.apps-row .current { background: #6d6d6d; }
.tray { margin-left: auto; width: 311px; display: flex; }
.clock { width: 74px; text-align: center; font-size: 12px; line-height: 18px; padding-top: 2px; letter-spacing: -.5px; }
.notice { border-right: 1px solid #888; font-size: 33px; font-weight: 600; fill: #fff; }
.notice text { fill: #fff; }
```
